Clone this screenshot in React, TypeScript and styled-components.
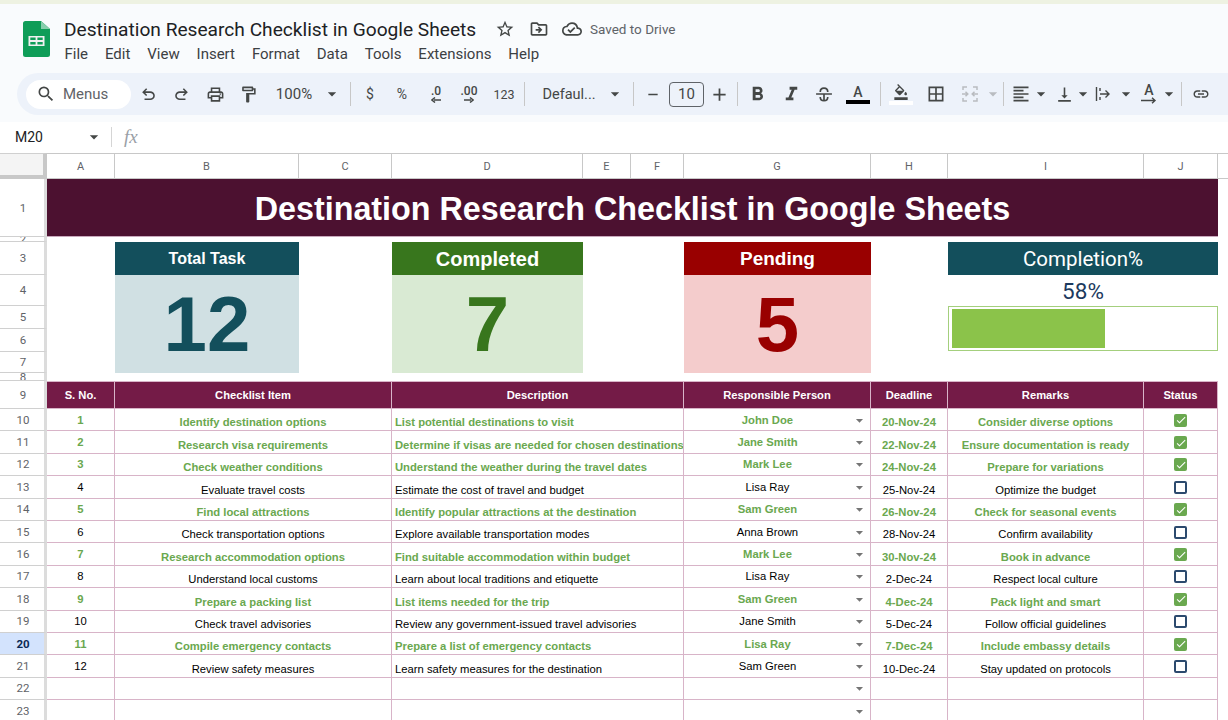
import React from 'react';
import styled, { createGlobalStyle } from 'styled-components';
import {
  MdSearch, MdOutlineLocalPrintshop, MdOutlineFormatPaint, MdArrowDropDown,
  MdRemove, MdAdd, MdStarBorder, MdOutlineDriveFileMove, MdOutlineCloudDone, MdFormatBold,
  MdFormatItalic, MdOutlineFormatColorFill, MdBorderAll, MdFormatAlignLeft,
  MdVerticalAlignBottom, MdLink, MdCheck, MdOutlineCommentBank,
} from 'react-icons/md';

const GlobalStyle = createGlobalStyle`
  html, body { margin: 0; padding: 0; background: #fff; overflow: hidden; }
  body { font-family: "Liberation Sans", Arial, sans-serif; }
`;

const Page = styled.div`
  width: 1228px;
  height: 720px;
  overflow: hidden;
  display: flex;
  flex-direction: column;
`;

const TopLine = styled.div`
  height: 4px;
  flex: none;
  background: #eef2e2;
`;

const Chrome = styled.div`
  flex: none;
  height: 118px;
  background: #f9fbfd;
  display: flex;
  flex-direction: column;
`;

const TitleBar = styled.div`
  height: 69px;
  flex: none;
  display: flex;
  align-items: flex-start;
  padding-left: 23px;
`;

const LogoWrap = styled.div`
  width: 27px;
  height: 36px;
  margin-top: 17px;
  flex: none;
`;

const TitleBlock = styled.div`
  margin-left: 14px;
  padding-top: 13px;
  display: flex;
  flex-direction: column;
`;

const TitleLine = styled.div`
  display: flex;
  align-items: center;
  height: 24px;
  color: #444746;
`;

const DocName = styled.span`
  font-family: Roboto, sans-serif;
  font-size: 19.15px;
  color: #202124;
  white-space: nowrap;
  width: 428px;
`;

const TitleIcon = styled.span<{ $w: number }>`
  width: ${p => p.$w}px;
  display: flex;
  justify-content: center;
  font-size: 20px;
  flex: none;
`;

const SavedText = styled.span`
  font-family: Roboto, sans-serif;
  font-size: 13.5px;
  color: #5f6368;
  margin-left: 6px;
  white-space: nowrap;
`;

const MenuLine = styled.nav`
  display: flex;
  gap: 16.9px;
  margin-top: 4px;
  margin-left: 0.5px;
  font-family: Roboto, sans-serif;
  font-size: 15px;
  line-height: 18px;
  color: #3c4043;
`;

const Toolbar = styled.div`
  margin-left: 17px;
  height: 42px;
  flex: none;
  background: #edf2fa;
  border-radius: 21px 0 0 21px;
  display: flex;
  align-items: center;
  padding-left: 9px;
  overflow: hidden;
  color: #444746;
`;

const MenuSearch = styled.div`
  width: 105px;
  height: 29px;
  flex: none;
  box-sizing: border-box;
  background: #fff;
  border-radius: 15px;
  display: flex;
  align-items: center;
  padding-left: 10px;
  gap: 7px;
  font-family: Roboto, sans-serif;
  font-size: 15px;
  color: #5f6368;
`;

const Slot = styled.div<{ $w: number; $size?: number }>`
  flex: none;
  width: ${p => p.$w}px;
  display: flex;
  justify-content: center;
  align-items: center;
  position: relative;
  font-family: Roboto, sans-serif;
  font-size: ${p => p.$size ?? 19}px;
  white-space: nowrap;
`;

const Caret = styled(MdArrowDropDown)<{ $muted?: boolean }>`
  font-size: 20px;
  flex: none;
  color: ${p => (p.$muted ? '#b9bcc0' : '#444746')};
`;

const Divider = styled.div`
  width: 1px;
  height: 24px;
  background: #c7c7c7;
  flex: none;
`;

const FontBox = styled.div`
  width: 35px;
  height: 25px;
  margin-left: 8px;
  flex: none;
  box-sizing: border-box;
  border: 1px solid #5f6368;
  border-radius: 4px;
  display: flex;
  align-items: center;
  justify-content: center;
  font-family: Roboto, sans-serif;
  font-size: 15px;
`;

const DecimalMark = styled.span`
  display: flex;
  flex-direction: column;
  align-items: center;
  font-family: Roboto, sans-serif;
  font-weight: 500;
  font-size: 12px;
  line-height: 11px;
`;

const ColorA = styled.span<{ $bar: string }>`
  display: flex;
  flex-direction: column;
  align-items: center;
  font-size: 14px;
  font-weight: 500;
  line-height: 14px;
  &::after {
    content: '';
    width: 24px;
    height: 4px;
    margin-top: 1px;
    background: ${p => p.$bar};
  }
`;

const ArrowA = styled.span`
  display: flex;
  flex-direction: column;
  align-items: center;
  font-size: 14px;
  font-weight: 500;
  line-height: 13px;
`;

const FormulaBar = styled.div`
  flex: none;
  height: 31px;
  box-sizing: border-box;
  padding-bottom: 2px;
  display: flex;
  align-items: center;
  background: #fff;
  font-family: Roboto, sans-serif;
  font-size: 14px;
  color: #202124;
`;

const CellName = styled.div`
  width: 84px;
  box-sizing: border-box;
  padding-left: 15px;
  flex: none;
`;

const FormulaDivider = styled.div`
  width: 1px;
  height: 20px;
  background: #d5d5d5;
  margin-left: 7px;
`;

const Fx = styled.span`
  font-family: "Liberation Serif", serif;
  font-style: italic;
  font-size: 19px;
  color: #9aa0a6;
  margin-left: 12px;
`;

const Sheet = styled.div`
  display: grid;
  grid-template-columns: 47px 68px 184px 93px 191px 48px 53px 187px 77px 196px 74px 10px;
  grid-template-rows: 26px 58px 5px 33px 31px 23px 23px 21px 8px 28px repeat(14, 22.4px);
  background: #fff;
`;

const Corner = styled.div`
  grid-column: 1;
  grid-row: 1;
  background: #f4f4f4;
  border-right: 4px solid #c8c8c8;
  border-bottom: 4px solid #c8c8c8;
  border-top: 1px solid #d0d0d0;
`;

const ColHead = styled.div<{ $col: number; $end?: boolean }>`
  grid-row: 1;
  grid-column: ${p => p.$col};
  display: flex;
  align-items: center;
  justify-content: center;
  box-sizing: border-box;
  border-top: 1px solid #c8c8c8;
  border-right: ${p => (p.$end ? 'none' : '1px solid #c8c8c8')};
  border-bottom: 1px solid #c8c8c8;
  font-size: 11px;
  color: #5f6368;
  font-family: Roboto, sans-serif;
`;

const RowHead = styled.div<{ $row: number; $active?: boolean }>`
  grid-column: 1;
  grid-row: ${p => p.$row + 1};
  display: flex;
  align-items: center;
  justify-content: center;
  overflow: hidden;
  box-sizing: border-box;
  border-right: 3px solid #dcdcdc;
  border-bottom: 1px solid #d0d0d0;
  padding-left: 2px;
  font-family: Roboto, sans-serif;
  font-size: 11.5px;
  font-weight: ${p => (p.$active ? 700 : 400)};
  background: ${p => (p.$active ? '#d3e3fd' : '#fff')};
  color: ${p => (p.$active ? '#0b2a55' : '#5f6368')};
`;

const Banner = styled.div`
  grid-column: 2 / 12;
  grid-row: 2;
  background: #4c1130;
  color: #fff;
  display: flex;
  align-items: center;
  justify-content: center;
  padding-top: 3px;
  font-size: 32.3px;
  font-weight: 700;
  border-bottom: 1px solid #c9a9bd;
  box-sizing: border-box;
`;

const CardHead = styled.div<{ $col: string; $bg: string; $size: number; $font?: string; $weight?: number }>`
  grid-column: ${p => p.$col};
  grid-row: 4;
  background: ${p => p.$bg};
  color: #fff;
  display: flex;
  align-items: center;
  justify-content: center;
  padding-top: 1px;
  font-family: ${p => p.$font ?? '"Liberation Sans"'}, sans-serif;
  font-weight: ${p => p.$weight ?? 700};
  font-size: ${p => p.$size}px;
`;

const CardValue = styled.div<{ $col: string; $bg: string; $fg: string }>`
  grid-column: ${p => p.$col};
  grid-row: 5 / 9;
  background: ${p => p.$bg};
  color: ${p => p.$fg};
  display: flex;
  align-items: center;
  justify-content: center;
  font-size: 78px;
  font-weight: 700;
  line-height: 1;
`;

const PercentValue = styled.div`
  grid-column: 10 / 12;
  grid-row: 5;
  display: flex;
  align-items: center;
  justify-content: center;
  font-family: Roboto, sans-serif;
  font-size: 22.5px;
  color: #1c3a5e;
`;

const ProgressCell = styled.div`
  grid-column: 10 / 12;
  grid-row: 6 / 8;
  box-sizing: border-box;
  height: 45px;
  border: 1px solid #a4cf7d;
  padding: 2px 3px;
`;

const ProgressFill = styled.div`
  height: 100%;
  background: #8bc34a;
`;

const TableHead = styled.div<{ $col: string }>`
  grid-column: ${p => p.$col};
  grid-row: 10;
  background: #741b47;
  color: #fff;
  display: flex;
  align-items: center;
  justify-content: center;
  font-size: 11.2px;
  font-weight: 700;
  box-sizing: border-box;
  border-right: 1px solid #d8b4c8;
  border-top: 1px solid #d8b4c8;
  border-bottom: 1px solid #d8b4c8;
`;

const Cell = styled.div<{ $col: string; $row: number; $done?: boolean; $left?: boolean; $mid?: boolean }>`
  grid-column: ${p => p.$col};
  grid-row: ${p => p.$row + 1};
  box-sizing: border-box;
  min-width: 0;
  display: flex;
  align-items: ${p => (p.$mid ? 'center' : 'flex-end')};
  justify-content: ${p => (p.$left ? 'flex-start' : 'center')};
  padding-left: ${p => (p.$left ? 3 : 0)}px;
  padding-top: ${p => (p.$mid ? 1 : 0)}px;
  border-right: 1px solid #d8b4c8;
  border-bottom: 1px solid #d8b4c8;
  font-size: 11.25px;
  line-height: 15px;
  white-space: nowrap;
  overflow: hidden;
  font-weight: ${p => (p.$done ? 700 : 400)};
  color: ${p => (p.$done ? '#6aa84f' : '#000')};
`;

const PersonName = styled.span`
  flex: 1;
  text-align: center;
`;

const CellCaret = styled(MdArrowDropDown)`
  font-size: 17px;
  color: #757575;
  flex: none;
  margin-right: 2px;
`;

const Tick = styled.span<{ $on: boolean }>`
  width: 13px;
  height: 13px;
  box-sizing: border-box;
  border-radius: 2px;
  display: flex;
  align-items: center;
  justify-content: center;
  color: #fff;
  font-size: 12px;
  background: ${p => (p.$on ? '#6aa84f' : 'transparent')};
  border: ${p => (p.$on ? 'none' : '2px solid #2c4a6e')};
`;

const SheetsLogo = () => (
  <svg width="27" height="36" viewBox="0 0 27 36">
    <path d="M2.500 0H18l9 8v25.500a2.500 2.500 0 0 1-2.500 2.500h-22A2.500 2.500 0 0 1 0 33.500V2.500A2.500 2.500 0 0 1 2.500 0z" fill="#0f9d58" />
    <path d="M18 0l9 8h-9z" fill="#87ceac" />
    <path d="M5.500 15h16v10h-16zM7.300 16.600v2.500h5.300v-2.500zM14.400 16.600v2.500h5.300v-2.500zM7.300 20.900v2.500h5.300v-2.500zM14.400 20.900v2.500h5.300v-2.500z" fill="#f1f1f1" fillRule="evenodd" />
  </svg>
);

const UNDO = 'M7 19v-2h7.100q1.575 0 2.738-1T18 13.500t-1.162-2.500T14.100 10H7.800l2.600 2.600L9 14 4 9l5-5 1.400 1.400L7.800 8h6.300q2.425 0 4.163 1.575T20 13.500t-1.737 3.925T14.100 19z';

const UndoIcon = ({ flip }: { flip?: boolean }) => (
  <svg width="19" height="19" viewBox="0 0 24 24">
    <path d={UNDO} fill="#444746" transform={flip ? 'translate(24 0) scale(-1 1)' : undefined} />
  </svg>
);

const StrikeIcon = () => (
  <svg width="20" height="20" viewBox="0 0 24 24" fill="none" stroke="#444746" strokeWidth="2">
    <path d="M2.500 12h19" />
    <path d="M7.500 9.500C7.500 6.500 9.500 5 12 5s4.500 1.500 4.500 4.500" />
    <path d="M12 12v8M7.500 15.500C7.500 18.500 9.500 20 12 20s4.500-1.500 4.500-4.500" />
  </svg>
);

const MergeIcon = () => (
  <svg width="18" height="18" viewBox="0 0 18 18" fill="none" stroke="#b9bcc0" strokeWidth="1.500">
    <path d="M6 2H2v3M12 2h4v3M6 16H2v-3M12 16h4v-3" />
    <path d="M1 9h5.500M4.500 6.800L6.800 9l-2.300 2.200M17 9h-5.500M13.500 6.800L11.200 9l2.300 2.200" />
  </svg>
);

const WrapIcon = () => (
  <svg width="16" height="16" viewBox="0 0 16 16" fill="none" stroke="#444746" strokeWidth="1.400">
    <path d="M1.500 1v14M5 8h9M10.500 4.500L14 8l-3.500 3.500M5 2v3M5 11v3" />
  </svg>
);

const DownArrow = () => (
  <svg width="10" height="6" viewBox="0 0 10 6" fill="none" stroke="#444746" strokeWidth="1.500">
    <path d="M10 3H3M4 0.500L1 3l3 2.500" />
  </svg>
);

const RightArrow = () => (
  <svg width="10" height="6" viewBox="0 0 10 6" fill="none" stroke="#444746" strokeWidth="1.500">
    <path d="M0 3h7M6 0.500L9 3 6 5.500" />
  </svg>
);

const LongArrow = () => (
  <svg width="16" height="7" viewBox="0 0 16 7" fill="none" stroke="#444746" strokeWidth="1.400">
    <path d="M0 3.500h14M11 0.800l3 2.700-3 2.700" />
  </svg>
);

const columns: [string, number][] = [
  ['A', 2], ['B', 3], ['C', 4], ['D', 5], ['E', 6], ['F', 7], ['G', 8], ['H', 9], ['I', 10], ['J', 11],
];

const tasks = [
  ['Identify destination options', 'List potential destinations to visit', 'John Doe', '20-Nov-24', 'Consider diverse options', true],
  ['Research visa requirements', 'Determine if visas are needed for chosen destinations', 'Jane Smith', '22-Nov-24', 'Ensure documentation is ready', true],
  ['Check weather conditions', 'Understand the weather during the travel dates', 'Mark Lee', '24-Nov-24', 'Prepare for variations', true],
  ['Evaluate travel costs', 'Estimate the cost of travel and budget', 'Lisa Ray', '25-Nov-24', 'Optimize the budget', false],
  ['Find local attractions', 'Identify popular attractions at the destination', 'Sam Green', '26-Nov-24', 'Check for seasonal events', true],
  ['Check transportation options', 'Explore available transportation modes', 'Anna Brown', '28-Nov-24', 'Confirm availability', false],
  ['Research accommodation options', 'Find suitable accommodation within budget', 'Mark Lee', '30-Nov-24', 'Book in advance', true],
  ['Understand local customs', 'Learn about local traditions and etiquette', 'Lisa Ray', '2-Dec-24', 'Respect local culture', false],
  ['Prepare a packing list', 'List items needed for the trip', 'Sam Green', '4-Dec-24', 'Pack light and smart', true],
  ['Check travel advisories', 'Review any government-issued travel advisories', 'Jane Smith', '5-Dec-24', 'Follow official guidelines', false],
  ['Compile emergency contacts', 'Prepare a list of emergency contacts', 'Lisa Ray', '7-Dec-24', 'Include embassy details', true],
  ['Review safety measures', 'Learn safety measures for the destination', 'Sam Green', '10-Dec-24', 'Stay updated on protocols', false],
] as [string, string, string, string, string, boolean][];

const headers: [string, string][] = [
  ['S. No.', '2'], ['Checklist Item', '3 / 5'], ['Description', '5 / 8'], ['Responsible Person', '8'],
  ['Deadline', '9'], ['Remarks', '10'], ['Status', '11'],
];

export default function App() {
  return (
    <Page>
      <GlobalStyle />
      <TopLine />
      <Chrome>
        <TitleBar>
          <LogoWrap><SheetsLogo /></LogoWrap>
          <TitleBlock>
            <TitleLine>
              <DocName>Destination Research Checklist in Google Sheets</DocName>
              <TitleIcon $w={26}><MdStarBorder /></TitleIcon>
              <TitleIcon $w={42}><MdOutlineDriveFileMove /></TitleIcon>
              <TitleIcon $w={24}><MdOutlineCloudDone /></TitleIcon>
              <SavedText>Saved to Drive</SavedText>
            </TitleLine>
            <MenuLine>
              {['File', 'Edit', 'View', 'Insert', 'Format', 'Data', 'Tools', 'Extensions', 'Help'].map(m => (
                <span key={m}>{m}</span>
              ))}
            </MenuLine>
          </TitleBlock>
        </TitleBar>
        <Toolbar>
          <MenuSearch><MdSearch size={20} color="#444746" />Menus</MenuSearch>
          <Slot $w={34}><UndoIcon /></Slot>
          <Slot $w={33}><UndoIcon flip /></Slot>
          <Slot $w={34}><MdOutlineLocalPrintshop /></Slot>
          <Slot $w={33}><MdOutlineFormatPaint /></Slot>
          <Slot $w={58} $size={15}>100%</Slot>
          <Slot $w={18}><Caret /></Slot>
          <Slot $w={18}><Divider /></Slot>
          <Slot $w={22} $size={14}>$</Slot>
          <Slot $w={42} $size={14}>%</Slot>
          <Slot $w={26}><DecimalMark>.0<DownArrow /></DecimalMark></Slot>
          <Slot $w={40}><DecimalMark>.00<RightArrow /></DecimalMark></Slot>
          <Slot $w={30} $size={12.5}>123</Slot>
          <Slot $w={10}><Divider /></Slot>
          <Slot $w={80} $size={14.5}>Defaul...</Slot>
          <Slot $w={12}><Caret /></Slot>
          <Slot $w={24}><Divider /></Slot>
          <Slot $w={16}><MdRemove /></Slot>
          <FontBox>10</FontBox>
          <Slot $w={30}><MdAdd size={21} /></Slot>
          <Slot $w={6}><Divider /></Slot>
          <Slot $w={34} $size={23}><MdFormatBold /></Slot>
          <Slot $w={34} $size={23}><MdFormatItalic /></Slot>
          <Slot $w={32}><StrikeIcon /></Slot>
          <Slot $w={36}><ColorA $bar="#000">A</ColorA></Slot>
          <Slot $w={8}><Divider /></Slot>
          <Slot $w={34}><ColorA $bar="#fff"><MdOutlineFormatColorFill size={16} /></ColorA></Slot>
          <Slot $w={36} $size={20}><MdBorderAll /></Slot>
          <Slot $w={32}><MergeIcon /></Slot>
          <Slot $w={14}><Caret $muted /></Slot>
          <Slot $w={6}><Divider /></Slot>
          <Slot $w={30}><MdFormatAlignLeft size={20} /></Slot>
          <Slot $w={10}><Caret /></Slot>
          <Slot $w={36}><MdVerticalAlignBottom /></Slot>
          <Slot $w={2}><Caret /></Slot>
          <Slot $w={38}><WrapIcon /></Slot>
          <Slot $w={8}><Caret /></Slot>
          <Slot $w={38}><ArrowA>A<LongArrow /></ArrowA></Slot>
          <Slot $w={2}><Caret /></Slot>
          <Slot $w={22}><Divider /></Slot>
          <Slot $w={18} $size={20}><MdLink /></Slot>
          <Slot $w={52}><MdOutlineCommentBank /></Slot>
        </Toolbar>
      </Chrome>
      <FormulaBar>
        <CellName>M20</CellName>
        <Caret />
        <FormulaDivider />
        <Fx>fx</Fx>
      </FormulaBar>
      <Sheet>
        <Corner />
        {columns.map(([name, col]) => <ColHead key={name} $col={col}>{name}</ColHead>)}
        <ColHead $col={12} $end />

        {Array.from({ length: 23 }, (_, i) => (
          <RowHead key={i} $row={i + 1} $active={i + 1 === 20}>{i + 1}</RowHead>
        ))}

        <Banner>Destination Research Checklist in Google Sheets</Banner>

        <CardHead $col="3" $bg="#134f5c" $size={16}>Total Task</CardHead>
        <CardValue $col="3" $bg="#d0e0e3" $fg="#134f5c">12</CardValue>
        <CardHead $col="5" $bg="#38761d" $size={20}>Completed</CardHead>
        <CardValue $col="5" $bg="#d9ead3" $fg="#38761d">7</CardValue>
        <CardHead $col="8" $bg="#990000" $size={19}>Pending</CardHead>
        <CardValue $col="8" $bg="#f4cccc" $fg="#990000">5</CardValue>
        <CardHead $col="10 / 12" $bg="#134f5c" $size={20.5} $font="Roboto" $weight={400}>Completion%</CardHead>
        <PercentValue>58%</PercentValue>
        <ProgressCell><ProgressFill style={{ width: `${(7 / 12) * 100}%` }} /></ProgressCell>

        {headers.map(([label, col]) => <TableHead key={label} $col={col}>{label}</TableHead>)}

        {tasks.map(([item, desc, person, deadline, remark, done], i) => {
          const row = i + 10;
          return (
            <React.Fragment key={item}>
              <Cell $col="2" $row={row} $done={done} $mid>{i + 1}</Cell>
              <Cell $col="3 / 5" $row={row} $done={done}>{item}</Cell>
              <Cell $col="5 / 8" $row={row} $done={done} $left>{desc}</Cell>
              <Cell $col="8" $row={row} $done={done} $mid>
                <PersonName>{person}</PersonName><CellCaret />
              </Cell>
              <Cell $col="9" $row={row} $done={done}>{deadline}</Cell>
              <Cell $col="10" $row={row} $done={done}>{remark}</Cell>
              <Cell $col="11" $row={row} $mid>
                <Tick $on={done}>{done && <MdCheck />}</Tick>
              </Cell>
            </React.Fragment>
          );
        })}
        {[22, 23].map(row => (
          <React.Fragment key={row}>
            <Cell $col="2" $row={row} />
            <Cell $col="3 / 5" $row={row} />
            <Cell $col="5 / 8" $row={row} />
            <Cell $col="8" $row={row} $mid><PersonName /><CellCaret /></Cell>
            <Cell $col="9" $row={row} />
            <Cell $col="10" $row={row} />
            <Cell $col="11" $row={row} />
          </React.Fragment>
        ))}
      </Sheet>
    </Page>
  );
}
